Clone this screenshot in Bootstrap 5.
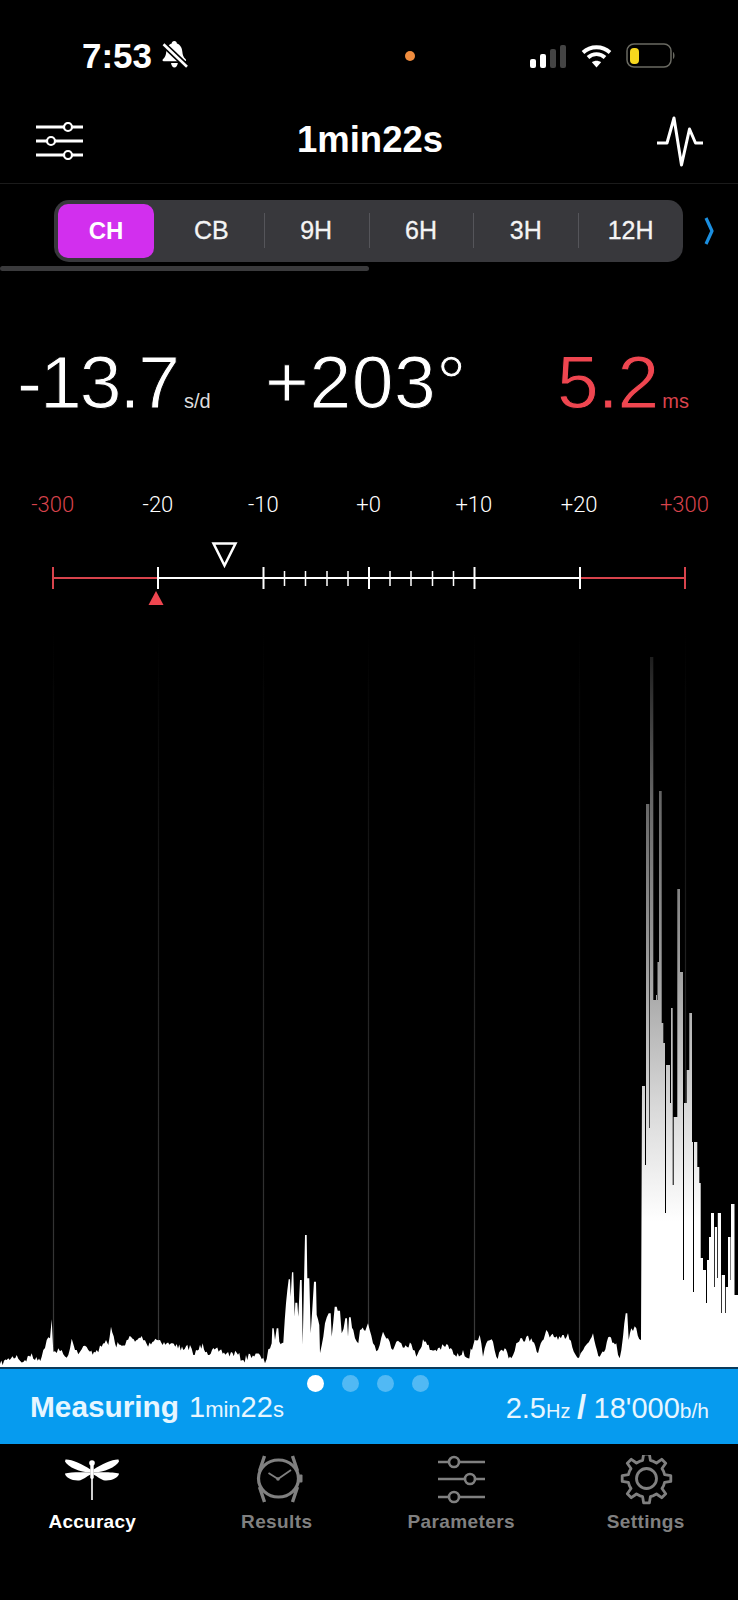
<!doctype html>
<html lang="en">
<head>
<meta charset="utf-8">
<title>Accuracy</title>
<link href="https://cdn.jsdelivr.net/npm/bootstrap@5.3.0/dist/css/bootstrap.min.css" rel="stylesheet">
<style>
html,body{background:#000;color:#fff;font-family:"Liberation Sans",Arial,sans-serif;}
.app-screen{width:738px;height:1600px;overflow:hidden;background:#000;}
.status-strip{height:104px;padding-top:39px;}
.st-time{margin-left:82px;font-size:35px;font-weight:700;line-height:33px;width:76px;}
.st-bell{margin:2px 0 0 3px;}
.st-dot{width:10px;height:10px;border-radius:50%;background:#f08c3e;margin-left:217px;margin-top:12px;}
.st-signal{margin:5px 0 0 115px;}
.st-wifi{margin:5px 0 0 15px;}
.st-batt{margin:4px 0 0 14px;}
.head-bar{height:80px;padding:0 35px 6px 36px;border-bottom:1px solid #1b1b1b;}
.head-title{font-size:36.5px;font-weight:700;line-height:1;}
.seg-wrap{height:88px;padding:16px 0 0 54px;position:relative;}
.seg-bar{width:629px;height:62px;background:#38383c;border-radius:15px;}
.seg-cell{flex:1 1 0;height:100%;font-size:25px;color:#f4f4f4;-webkit-text-stroke:.3px #f4f4f4;position:relative;}
.seg-cell.seg-sep::before{content:"";position:absolute;left:0;top:13px;height:35px;width:1px;background:#55555a;}
.seg-on{flex:0 0 96px;margin:4px 5px 4px 4px;height:54px;background:#d22fee;border-radius:10px;font-weight:700;font-size:24px;color:#fff;-webkit-text-stroke:0;}
.seg-chev{margin:17px 0 0 21px;}
.seg-scroll{position:absolute;left:0;top:82px;width:369px;height:5px;background:#3a3a3c;border-radius:3px;}
.read-row{height:221px;padding:73px 0 0 17px;font-family:"Liberation Sans",Arial,sans-serif;font-weight:400;}
.read-val{font-size:75px;line-height:75px;-webkit-text-stroke:1px #000;}
.read-unit{font-weight:400;font-size:20px;letter-spacing:0;margin-left:6px;color:#ddd;-webkit-text-stroke:0;}
.read-a{width:248px;color:#fff;letter-spacing:-2px;}
.read-b{width:292px;color:#fff;letter-spacing:.6px;}
.read-c{color:#ef4650;letter-spacing:-1px;}
.read-c .read-unit{color:#d8434c;margin-left:4px;}
.scale-row{display:grid;grid-template-columns:repeat(7,105.3px);height:24px;font-family:Roboto,"Liberation Sans",sans-serif;font-weight:300;font-size:22px;line-height:24px;margin-bottom:0;}
.scale-red{color:#d8434c;}
.ruler-svg,.chart-svg{display:block;}
.chart-rule{height:2px;background:#0a3b5c;}
.meas-strip{height:75px;background:#069bef;color:#e6f6ff;padding-top:6px;}
.dot-row{height:17px;padding-left:307px;gap:18px;}
.pg-dot{width:17px;height:17px;border-radius:50%;background:rgba(255,255,255,.3);}
.pg-dot.pg-on{background:#fff;}
.meas-line{height:30px;line-height:30px;padding:0 29px 0 30px;font-size:29px;white-space:nowrap;}
.meas-b{font-weight:700;font-size:29.8px;margin-right:10px;}
.meas-s{font-size:22px;}
.meas-t{font-size:20px;}
.meas-u{font-size:21px;}
.meas-slash{font-weight:700;font-size:33px;margin:0 7.5px 0 6.5px;}
.tab-bar{padding-top:11px;}
.tab-item{color:#808080;font-weight:700;font-size:19px;letter-spacing:.4px;line-height:24px;text-align:center;}
.tab-item svg{display:block;margin:0 auto 5px;}
.tab-on{color:#fff;letter-spacing:.25px;}
</style>
</head>
<body>
<div class="app-screen d-flex flex-column">

  <div class="status-strip d-flex align-items-start">
    <div class="st-time">7:53</div>
    <svg class="st-bell" width="27" height="28" viewBox="0 0 27 28"><path d="M13.300 0c1.600 0 2.500 1.100 2.600 2.500C19.500 3.700 21 7 21.300 10.500c.3 3.500 1.200 6 3.400 7.800.8.800.4 1.900-.8 1.900H2.700c-1.200 0-1.600-1.100-.8-1.900C4.100 16.500 5 14 5.300 10.500 5.600 7 7.100 3.700 10.700 2.500 10.800 1.100 11.700 0 13.300 0z" fill="#fff"/><path d="M10 22h6.800c-.3 2.500-1.700 4.500-3.400 4.500S10.300 24.500 10 22z" fill="#fff"/><path d="M2.500 3.300L26 25.700" stroke="#000" stroke-width="6"/><path d="M2.500 3.300L26 25.700" stroke="#fff" stroke-width="2.600"/></svg>
    <div class="st-dot"></div>
    <svg class="st-signal" width="36" height="24" viewBox="0 0 36 24"><rect x="0" y="15" width="6" height="9" rx="2" fill="#fff"/><rect x="10" y="10" width="6" height="14" rx="2" fill="#fff"/><rect x="20" y="5" width="6" height="19" rx="2" fill="#444"/><rect x="30" y="1" width="6" height="23" rx="2" fill="#444"/></svg>
    <svg class="st-wifi" width="31" height="24" viewBox="0 0 31 24"><path d="M2 8.500C9.500 1.500 21.500 1.500 29 8.500" fill="none" stroke="#fff" stroke-width="3.800"/><path d="M7 13.500c4.800-4.400 12.200-4.400 17 0" fill="none" stroke="#fff" stroke-width="3.800"/><path d="M15.500 23.500l-4.600-5.200c2.700-2 6.500-2 9.200 0z" fill="#fff"/></svg>
    <svg class="st-batt" width="50" height="26" viewBox="0 0 50 26"><rect x="1" y="1" width="44" height="23" rx="7" fill="none" stroke="#6a6a62" stroke-width="1.500"/><rect x="4" y="5" width="9" height="16" rx="4" fill="#f6d71e"/><path d="M47 9c2 1 2 6 0 7z" fill="#6a6a62"/></svg>
  </div>

  <header class="head-bar d-flex align-items-center justify-content-between">
    <svg width="47" height="38" viewBox="0 0 47 38">
      <g fill="#000" stroke="#fff"><path d="M0 5h47M0 19h47M0 33h47" stroke-width="3.200"/><circle cx="32" cy="5" r="4" stroke-width="2.200"/><circle cx="15" cy="19" r="4" stroke-width="2.200"/><circle cx="32" cy="33" r="4" stroke-width="2.200"/></g>
    </svg>
    <div class="head-title">1min22s</div>
    <svg width="46" height="52" viewBox="0 0 46 52"><path d="M0 28h10l7-25 7.500 47 8-36 6 14h7.500" fill="none" stroke="#fff" stroke-width="3" stroke-linejoin="round"/></svg>
  </header>

  <div class="seg-wrap d-flex align-items-start">
    <div class="seg-bar d-flex align-items-center">
      <div class="seg-cell d-flex align-items-center justify-content-center seg-on">CH</div>
      <div class="seg-cell d-flex align-items-center justify-content-center">CB</div>
      <div class="seg-cell d-flex align-items-center justify-content-center seg-sep">9H</div>
      <div class="seg-cell d-flex align-items-center justify-content-center seg-sep">6H</div>
      <div class="seg-cell d-flex align-items-center justify-content-center seg-sep">3H</div>
      <div class="seg-cell d-flex align-items-center justify-content-center seg-sep">12H</div>
    </div>
    <svg class="seg-chev" width="10" height="28" viewBox="0 0 10 28"><path d="M2 1l6 13-6 13" fill="none" stroke="#1b8fe0" stroke-width="3.200" stroke-linejoin="round"/></svg>
    <div class="seg-scroll"></div>
  </div>

  <div class="read-row d-flex align-items-start">
    <div class="read-val read-a">-13.7<span class="read-unit">s/d</span></div>
    <div class="read-val read-b">+203°</div>
    <div class="read-val read-c">5.2<span class="read-unit">ms</span></div>
  </div>

  <div class="scale-row text-center">
    <div class="scale-red">-300</div><div>-20</div><div>-10</div><div>+0</div><div>+10</div><div>+20</div><div class="scale-red">+300</div>
  </div>

  <svg class="ruler-svg" width="738" height="103" viewBox="0 517 738 103">
    <path d="M53 578H158M580 578H685" stroke="#d8434c" stroke-width="2"/>
    <path d="M158 578H580" stroke="#fff" stroke-width="2"/>
    <path d="M53 567v22M685 567v22" stroke="#d8434c" stroke-width="2"/>
    <path d="M158 567v22M263.500 567v22M369 567v22M474.500 567v22M580 567v22" stroke="#fff" stroke-width="2"/>
    <path d="M284.500 571v15M305.500 571v15M327 571v15M348 571v15M390 571v15M411 571v15M432.500 571v15M453.500 571v15" stroke="#fff" stroke-width="1.500"/>
    <path d="M213.500 543.500h22l-11 22z" fill="none" stroke="#fff" stroke-width="2.500"/>
    <path d="M156 591l7.500 14h-15z" fill="#ef4650"/>
  </svg>

  <svg id="chart" class="chart-svg" width="738" height="747" viewBox="0 620 738 747">
    <defs>
      <linearGradient id="gridFade" gradientUnits="userSpaceOnUse" x1="0" y1="630" x2="0" y2="1367"><stop offset="0" stop-color="#000"/><stop offset=".5" stop-color="#242424"/><stop offset="1" stop-color="#3c3c3c"/></linearGradient>
      <linearGradient id="peakFade" gradientUnits="userSpaceOnUse" x1="0" y1="640" x2="0" y2="1367">
        <stop offset="0" stop-color="#151515"/><stop offset=".22" stop-color="#666"/><stop offset=".43" stop-color="#999"/><stop offset=".64" stop-color="#d8d8d8"/><stop offset=".8" stop-color="#fff"/><stop offset="1" stop-color="#fff"/>
      </linearGradient>
    </defs>
    <path d="M53.500 630V1367M158.500 630V1367M263.500 630V1367M368.500 630V1367M474.500 630V1367M579.500 630V1367M685.500 630V1367" stroke="url(#gridFade)" stroke-width="1.200"/>
    <path id="histo" fill="url(#peakFade)" d=""/>
  </svg>

  <div class="chart-rule"></div>

  <div class="meas-strip">
    <div class="dot-row d-flex"><span class="pg-dot pg-on"></span><span class="pg-dot"></span><span class="pg-dot"></span><span class="pg-dot"></span></div>
    <div class="meas-line d-flex justify-content-between">
      <div><span class="meas-b">Measuring</span>1<span class="meas-s">min</span>22<span class="meas-s">s</span></div>
      <div>2.5<span class="meas-t">Hz</span><span class="meas-slash">/</span>18'000<span class="meas-u">b/h</span></div>
    </div>
  </div>

  <nav class="tab-bar row g-0">
    <div class="col-3 tab-item tab-on">
      <svg width="60" height="50" viewBox="0 0 60 50">
        <circle cx="30" cy="8" r="2.800" fill="#fff"/>
        <path d="M28.300 10h3.400v13l-.9 1v21h-1.600V24l-.9-1z" fill="#fff"/>
        <path d="M3.500 4.500C9 4 20 9 28.500 14.500V17.500C18 17.500 6 12 3 6.500z" fill="#fff"/>
        <path d="M56.500 4.500C51 4 40 9 31.500 14.500V17.500C42 17.500 54 12 57 6.500z" fill="#fff"/>
        <path d="M28.500 17.500C20 17 8 17 3 18.500 3 22 10 26 17 25.500 21 25 25 21 28.500 19.500z" fill="#fff"/>
        <path d="M31.500 17.500C40 17 52 17 57 18.500 57 22 50 26 43 25.500 39 25 35 21 31.500 19.500z" fill="#fff"/>
      </svg>
      Accuracy
    </div>
    <div class="col-3 tab-item">
      <svg width="60" height="50" viewBox="0 0 60 50">
        <g fill="none" stroke="#808080">
          <ellipse cx="31.500" cy="23.500" rx="20" ry="18.500" stroke-width="3.200"/>
          <path d="M17.500 1l-5 15M45.500 1l5 15M17.500 47l-5-15M45.500 47l5-15" stroke-width="3.400"/>
          <path d="M31 24l-9.500-6M31 24l13-9" stroke-width="1.800"/>
        </g>
        <rect x="52" y="19.500" width="3.500" height="8" rx="1" fill="#808080"/>
        <circle cx="31" cy="24" r="1.800" fill="#808080"/>
      </svg>
      Results
    </div>
    <div class="col-3 tab-item">
      <svg width="60" height="50" viewBox="0 0 60 50">
        <g fill="#000" stroke="#808080"><path d="M7 7h47M7 24h47M7 42h47" stroke-width="2.600"/><circle cx="23" cy="7" r="5" stroke-width="2.600"/><circle cx="39" cy="24" r="5" stroke-width="2.600"/><circle cx="23" cy="42" r="5" stroke-width="2.600"/></g>
      </svg>
      Parameters
    </div>
    <div class="col-3 tab-item">
      <svg width="60" height="50" viewBox="0 0 60 50">
        <path id="gearOutline" fill="none" stroke="#808080" stroke-width="2.800" stroke-linejoin="round" d=""/>
        <circle cx="30.500" cy="23.500" r="10" fill="none" stroke="#808080" stroke-width="2.800"/>
      </svg>
      Settings
    </div>
  </nav>
</div>

<script>
// Histogram outline, traced from the reference.
var left=[[0,552],[20,540],[25,535],[50,525],[60,542],[75,540],[95,520],[105,540],[125,530],[130,510],[140,480],[150,475],[155,418],[160,515],[175,505],[185,510],[200,533],[215,476],[225,510],[240,515],[255,497],[270,515],[290,510],[305,500],[318,480],[325,495],[333,440],[345,490],[365,497],[380,480],[393,470],[405,485],[425,468],[440,492],[466,476],[480,480],[500,490],[530,492],[550,510],[570,495],[580,525],[608,490],[620,515],[660,510],[680,520],[710,518],[730,540],[750,522],[780,525],[795,550],[805,508],[815,490],[817,445],[821,445],[825,480],[830,445],[835,445],[838,485],[850,488],[858,370],[866,298],[870,298],[872,350],[876,277],[880,277],[884,410],[886,368],[892,368],[895,410],[900,300],[905,300],[908,495],[915,165],[920,165],[922,295],[928,295],[932,460],[942,305],[948,305],[950,405],[958,435],[960,520],[975,430],[986,400],[992,400],[995,470],[1004,380],[1010,380],[1013,392],[1020,392],[1025,460],[1036,415],[1041,415],[1044,470],[1047,412],[1052,412],[1060,450],[1075,490],[1080,450],[1100,440]];
var mid=[[0,430],[15,490],[30,510],[45,455],[60,475],[75,510],[85,485],[100,490],[130,492],[145,530],[165,478],[190,510],[210,505],[240,495],[265,530],[285,510],[300,535],[320,480],[335,465],[345,530],[355,490],[375,485],[385,530],[410,505],[430,535],[445,490],[475,470],[490,475],[510,520],[535,450],[550,465],[570,480],[600,460],[630,535],[650,500],[675,460],[695,530],[725,470],[745,490],[755,535],[765,470],[773,400],[778,400],[782,480],[790,445],[805,445],[818,480]];
var steps=[[642,1086],[645,1165],[646,804],[649.3,1128],[650,657],[653.3,1000],[656,995],[657,1000],[657.5,962],[659,791],[661.7,1023],[663.3,1043],[665,1213],[666,1065],[670,1103],[671,1008],[672.7,1185],[673.7,1117],[677.3,889],[680,972],[683,1280],[684,1103],[686.7,1070],[689.3,1013],[692,1142],[693,1292],[694,1142],[697.3,1167],[699.3,1183],[700.7,1258],[703,1270],[706,1303],[707,1260],[709,1237],[711,1213],[714,1287],[714.8,1227],[717,1278],[717.8,1213],[721,1313],[721.8,1275],[725,1313],[725.8,1287],[728,1237],[730.500,1280],[731,1204],[734.500,1295],[738,1290]];
var seed=7;function rnd(){seed=(seed*16807)%2147483647;return seed/2147483647;}
var pts=[];left.forEach(function(p){pts.push([p[0]/3,1180+p[1]/3]);});
mid.forEach(function(p){pts.push([368+p[0]/3,1180+p[1]/3]);});
var d='M0 1367L0 '+pts[0][1].toFixed(1);
for(var i=1;i<pts.length;i++){
  var a=pts[i-1],b=pts[i],n=Math.floor((b[0]-a[0])/1.3);
  for(var k=1;k<n;k++){var t=k/n;var y=a[1]+(b[1]-a[1])*t;y+=(rnd()-.4)*(1367-y>45?3:7);d+='L'+(a[0]+(b[0]-a[0])*t).toFixed(1)+' '+Math.min(1365,y).toFixed(1);}
  d+='L'+b[0].toFixed(1)+' '+b[1].toFixed(1);
}
d+='L641 1340';
steps.forEach(function(s,idx){var nx=idx+1<steps.length?steps[idx+1][0]:738;d+='L'+s[0]+' '+s[1]+'L'+nx+' '+s[1];});
d+='L738 1367Z';
document.getElementById('histo').setAttribute('d',d);
// Eight-tooth gear outline.
var g='',T=8;for(var j=0;j<T;j++){var c=(j/T)*2*Math.PI-Math.PI/2,w=2*Math.PI/T;
  [[-.5,18.500],[-.27,18.500],[-.15,24.500],[.15,24.500],[.27,18.500],[.5,18.500]].forEach(function(q,m){var an=c+q[0]*w;var x=30.5+q[1]*Math.cos(an),y=23.5+q[1]*Math.sin(an);g+=((j===0&&m===0)?'M':'L')+x.toFixed(1)+' '+y.toFixed(1);});}
document.getElementById('gearOutline').setAttribute('d',g+'Z');
</script>
<script src="https://cdn.jsdelivr.net/npm/bootstrap@5.3.0/dist/js/bootstrap.bundle.min.js"></script>
</body>
</html>
